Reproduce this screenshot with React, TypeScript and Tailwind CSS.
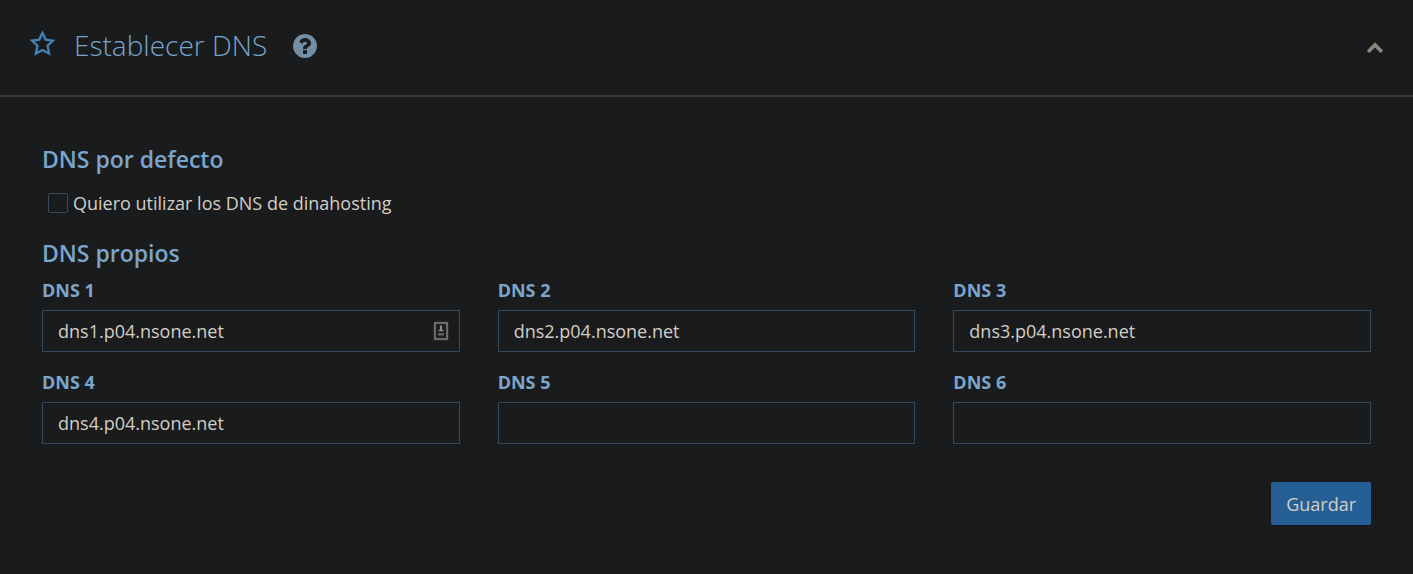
import { useState } from "react";

const initialServers = [
  "dns1.p04.nsone.net",
  "dns2.p04.nsone.net",
  "dns3.p04.nsone.net",
  "dns4.p04.nsone.net",
  "",
  "",
];

function StarIcon() {
  return (
    <svg viewBox="0 0 26 26" className="size-[26px]" fill="none" stroke="currentColor" strokeWidth="2.3" aria-hidden="true">
      <path d="M13.5 3 L16.7 9.6 L24 10.6 L18.6 15.7 L20.1 23.6 L13.5 20 L6.9 23.6 L8.4 15.7 L3 10.6 L10.3 9.6 Z" />
    </svg>
  );
}

function HelpIcon() {
  return (
    <svg viewBox="128 128 1536 1536" className="size-6" fill="currentColor" aria-hidden="true">
      <path d="M1024 1376v-192q0-14-9-23t-23-9h-192q-14 0-23 9t-9 23v192q0 14 9 23t23 9h192q14 0 23-9t9-23zm256-672q0-88-55.5-163t-138.5-116-170-41q-243 0-371 213-15 24 8 42l132 100q7 6 19 6 16 0 25-12 53-68 86-92 34-24 86-24 48 0 85.5 26t37.5 59q0 38-20 61t-68 45q-63 28-115.5 86.5t-52.5 125.5v36q0 14 9 23t23 9h192q14 0 23-9t9-23q0-19 21.5-49.5t54.5-49.5q32-18 49-28.5t46-35 44.5-48 28-60.5 12.5-81zm384 192q0 209-103 385.5t-279.5 279.5-385.5 103-385.5-103-279.5-279.5-103-385.5 103-385.5 279.5-279.5 385.5-103 385.5 103 279.5 279.5 103 385.5z" />
    </svg>
  );
}

function ChevronUpIcon() {
  return (
    <svg viewBox="90 435 1612 1080" className="h-[11px] w-4" fill="currentColor" aria-hidden="true">
      <path d="M1683 1331l-166 165q-19 19-45 19t-45-19l-531-531-531 531q-19 19-45 19t-45-19l-166-165q-19-19-19-45.5t19-45.5l742-741q19-19 45-19t45 19l742 741q19 19 19 45.5t-19 45.5z" />
    </svg>
  );
}

function AutofillIcon() {
  return (
    <svg viewBox="0 0 16 20" className="h-5 w-4" aria-hidden="true">
      <rect x="0.5" y="0.5" width="15" height="19" rx="1.5" fill="#3a3b3b" />
      <rect x="2" y="2" width="12" height="16" fill="#1e1f1f" stroke="#7a7a7a" strokeWidth="1.6" />
      <path d="M7 4.5h2v3.5l2 2.2H5l2-2.2z" fill="#8a8a8a" />
      <path d="M5 12h6v2.5H5z" fill="#606060" />
    </svg>
  );
}

function Header() {
  return (
    <header className="flex items-center justify-between border-b-2 border-[#373c3e] pt-6 pr-[30px] pb-7 pl-[29px]">
      <div className="flex items-center">
        <button type="button" aria-label="Favorito" className="mb-1.5 text-[#4683b5]">
          <StarIcon />
        </button>
        <h1 className="ml-[19px] text-[28px] leading-[43px] font-light text-[#76a5cc]">Establecer DNS</h1>
        <button type="button" aria-label="Ayuda" className="ml-[26px] text-[#728fa5]">
          <HelpIcon />
        </button>
      </div>
      <button type="button" aria-label="Contraer" className="mt-1 text-[#8b887c]">
        <ChevronUpIcon />
      </button>
    </header>
  );
}

export default function App() {
  const [servers, setServers] = useState(initialServers);

  return (
    <main className="min-h-screen bg-[#1a1b1c] font-['Open_Sans',sans-serif] text-lg text-[#d2cec6]">
      <Header />
      <form className="px-[42px] pt-[46px] pb-12" onSubmit={(e) => e.preventDefault()}>
        <h2 className="text-[23px] leading-8 font-semibold text-[#7ba5cc]">DNS por defecto</h2>
        <label className="mt-3.5 ml-1.5 flex w-fit items-center gap-[5px] leading-7">
          <input
            type="checkbox"
            className="size-5 appearance-none rounded-xs border border-[#34495c] checked:bg-[#265f95]"
          />
          Quiero utilizar los DNS de dinahosting
        </label>
        <h2 className="mt-5 text-[23px] leading-8 font-semibold text-[#7ba5cc]">DNS propios</h2>
        <div className="mt-[9px] grid grid-cols-3 gap-x-[38px] gap-y-[18px]">
          {servers.map((value, i) => (
            <div key={i}>
              <label htmlFor={`dns-${i + 1}`} className="block leading-6 font-bold text-[#7ba5cc]">
                DNS {i + 1}
              </label>
              <div className="relative mt-2">
                <input
                  id={`dns-${i + 1}`}
                  type="text"
                  value={value}
                  onChange={(e) => setServers(servers.map((s, j) => (j === i ? e.target.value : s)))}
                  className="block h-[42px] w-full border border-[#34495c] bg-transparent px-[15px] outline-none focus:border-[#4683b5]"
                />
                {i === 0 && (
                  <span className="absolute inset-y-0 right-[11px] flex items-center">
                    <AutofillIcon />
                  </span>
                )}
              </div>
            </div>
          ))}
        </div>
        <div className="mt-[38px] flex justify-end">
          <button type="submit" className="h-[43px] rounded-xs bg-[#265f95] px-[15px]">
            Guardar
          </button>
        </div>
      </form>
    </main>
  );
}
